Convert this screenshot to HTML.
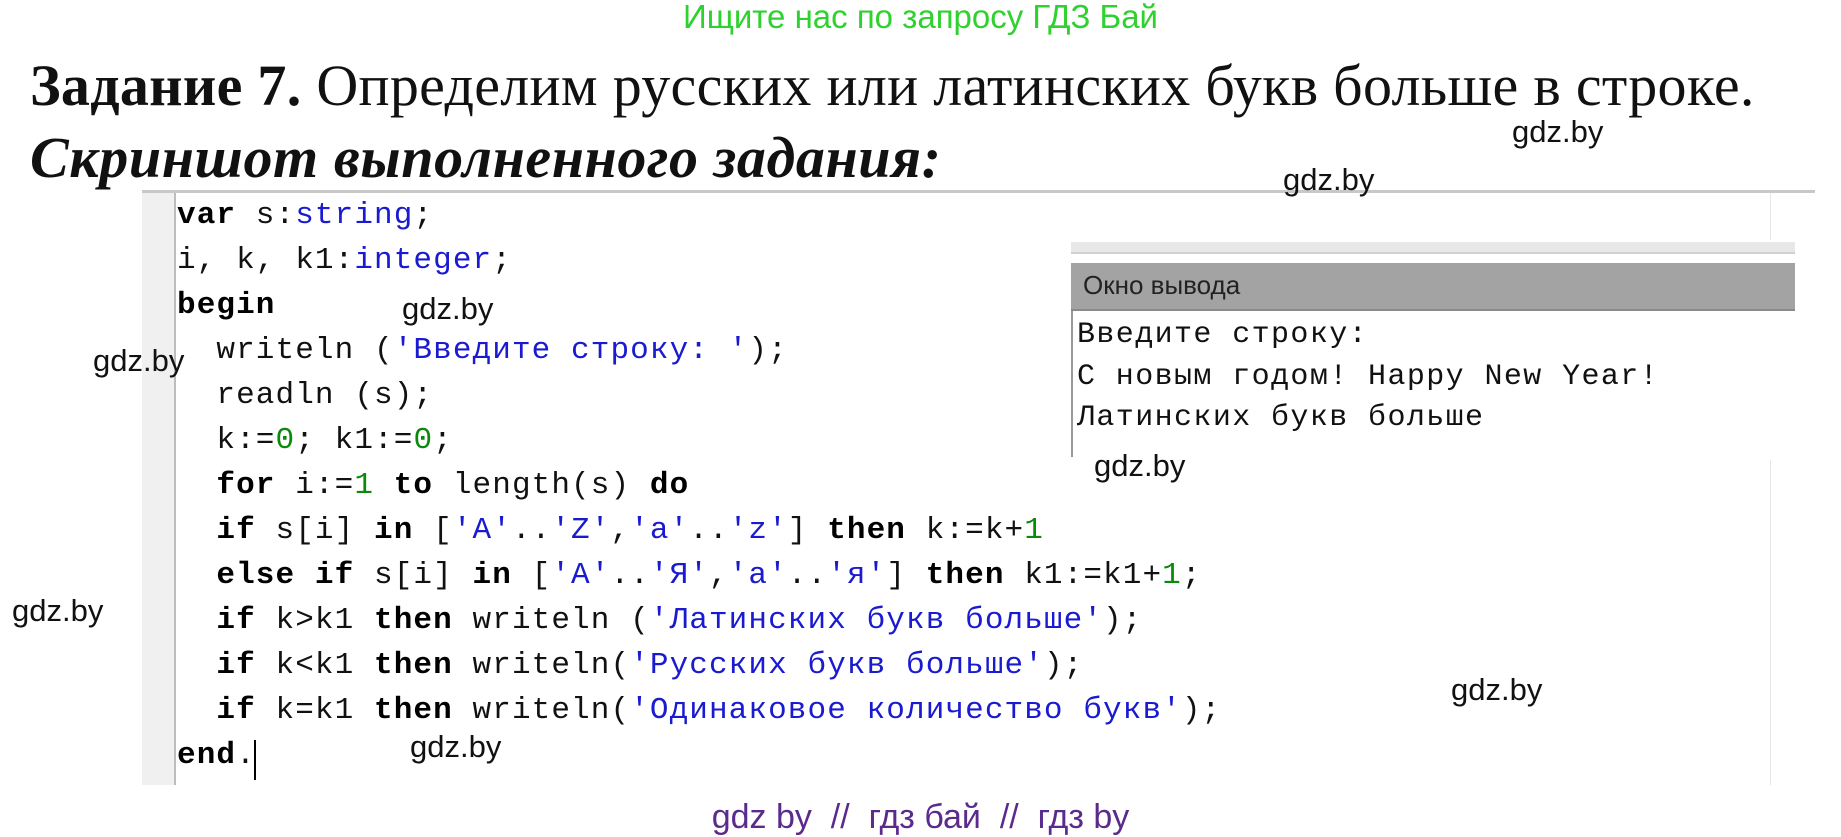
<!DOCTYPE html>
<html><head><meta charset="utf-8"><style>
body{margin:0;width:1841px;height:836px;background:#fff;position:relative;overflow:hidden;font-family:"Liberation Sans",sans-serif}
.a{position:absolute;white-space:pre}
.wm{position:absolute;font-size:31px;color:#111;font-family:"Liberation Sans",sans-serif;white-space:pre}
.code{position:absolute;left:177px;font-family:"Liberation Mono",monospace;font-size:31px;letter-spacing:1.1px;color:#111;white-space:pre;line-height:45px}
.code b{color:#000}
.s{color:#1a1ad0}.n{color:#0a8a0a}.t{color:#1a1ad0}
.out{position:absolute;left:1077px;font-family:"Liberation Mono",monospace;font-size:30px;letter-spacing:1.4px;color:#111;white-space:pre}
</style></head><body>
<div class="a" style="left:0;width:1841px;text-align:center;top:-2px;font-size:33px;color:#2fd12f">Ищите нас по запросу ГДЗ Бай</div>
<div class="a" style="left:30px;top:52px;font-family:'Liberation Serif',serif;font-size:58px;letter-spacing:0.3px;color:#111"><b>Задание 7.</b> Определим русских или латинских букв больше в строке.</div>
<div class="a" style="left:30px;top:124px;font-family:'Liberation Serif',serif;font-size:58px;letter-spacing:0.6px;font-weight:bold;font-style:italic;color:#111">Скриншот выполненного задания:</div>

<div style="position:absolute;left:142px;top:190px;width:1673px;height:3px;background:#c8c8c8"></div>
<div style="position:absolute;left:142px;top:193px;width:32px;height:592px;background:#f0f0f0;border-right:2px solid #bdbdbd"></div>
<div style="position:absolute;left:1770px;top:193px;width:1px;height:592px;background:#e6e6e6"></div>

<div class="code" style="top:193px"><b>var</b> s:<span class="t">string</span>;
i, k, k1:<span class="t">integer</span>;
<b>begin</b>
  writeln (<span class="s">'Введите строку: '</span>);
  readln (s);
  k:=<span class="n">0</span>; k1:=<span class="n">0</span>;
  <b>for</b> i:=<span class="n">1</span> <b>to</b> length(s) <b>do</b>
  <b>if</b> s[i] <b>in</b> [<span class="s">'A'</span>..<span class="s">'Z'</span>,<span class="s">'a'</span>..<span class="s">'z'</span>] <b>then</b> k:=k+<span class="n">1</span>
  <b>else if</b> s[i] <b>in</b> [<span class="s">'А'</span>..<span class="s">'Я'</span>,<span class="s">'а'</span>..<span class="s">'я'</span>] <b>then</b> k1:=k1+<span class="n">1</span>;
  <b>if</b> k&gt;k1 <b>then</b> writeln (<span class="s">'Латинских букв больше'</span>);
  <b>if</b> k&lt;k1 <b>then</b> writeln(<span class="s">'Русских букв больше'</span>);
  <b>if</b> k=k1 <b>then</b> writeln(<span class="s">'Одинаковое количество букв'</span>);
<b>end</b>.</div>
<div style="position:absolute;left:254px;top:740px;width:2px;height:40px;background:#000"></div>

<div style="position:absolute;left:1071px;top:240px;width:724px;height:220px;background:#fff"></div>
<div style="position:absolute;left:1071px;top:242px;width:724px;height:10px;background:#e8e8e8;border-bottom:2px solid #d0d0d0"></div>
<div style="position:absolute;left:1071px;top:263px;width:724px;height:46px;background:#a3a3a3;border-bottom:2px solid #8a8a8a"></div>
<div class="a" style="left:1083px;top:270px;font-size:26px;color:#222">Окно вывода</div>
<div style="position:absolute;left:1071px;top:311px;width:2px;height:146px;background:#999"></div>
<div class="out" style="top:318px">Введите строку:</div>
<div class="out" style="top:360px">С новым годом! Happy New Year!</div>
<div class="out" style="top:401px">Латинских букв больше</div>

<div class="wm" style="left:1512px;top:114px">gdz.by</div>
<div class="wm" style="left:1283px;top:162px">gdz.by</div>
<div class="wm" style="left:402px;top:291px">gdz.by</div>
<div class="wm" style="left:93px;top:343px">gdz.by</div>
<div class="wm" style="left:1094px;top:448px">gdz.by</div>
<div class="wm" style="left:12px;top:593px">gdz.by</div>
<div class="wm" style="left:1451px;top:672px">gdz.by</div>
<div class="wm" style="left:410px;top:729px">gdz.by</div>

<div class="a" style="left:0;width:1841px;text-align:center;top:798px;font-size:34px;color:#5a2a8c">gdz by  //  гдз бай  //  гдз by</div>
</body></html>
